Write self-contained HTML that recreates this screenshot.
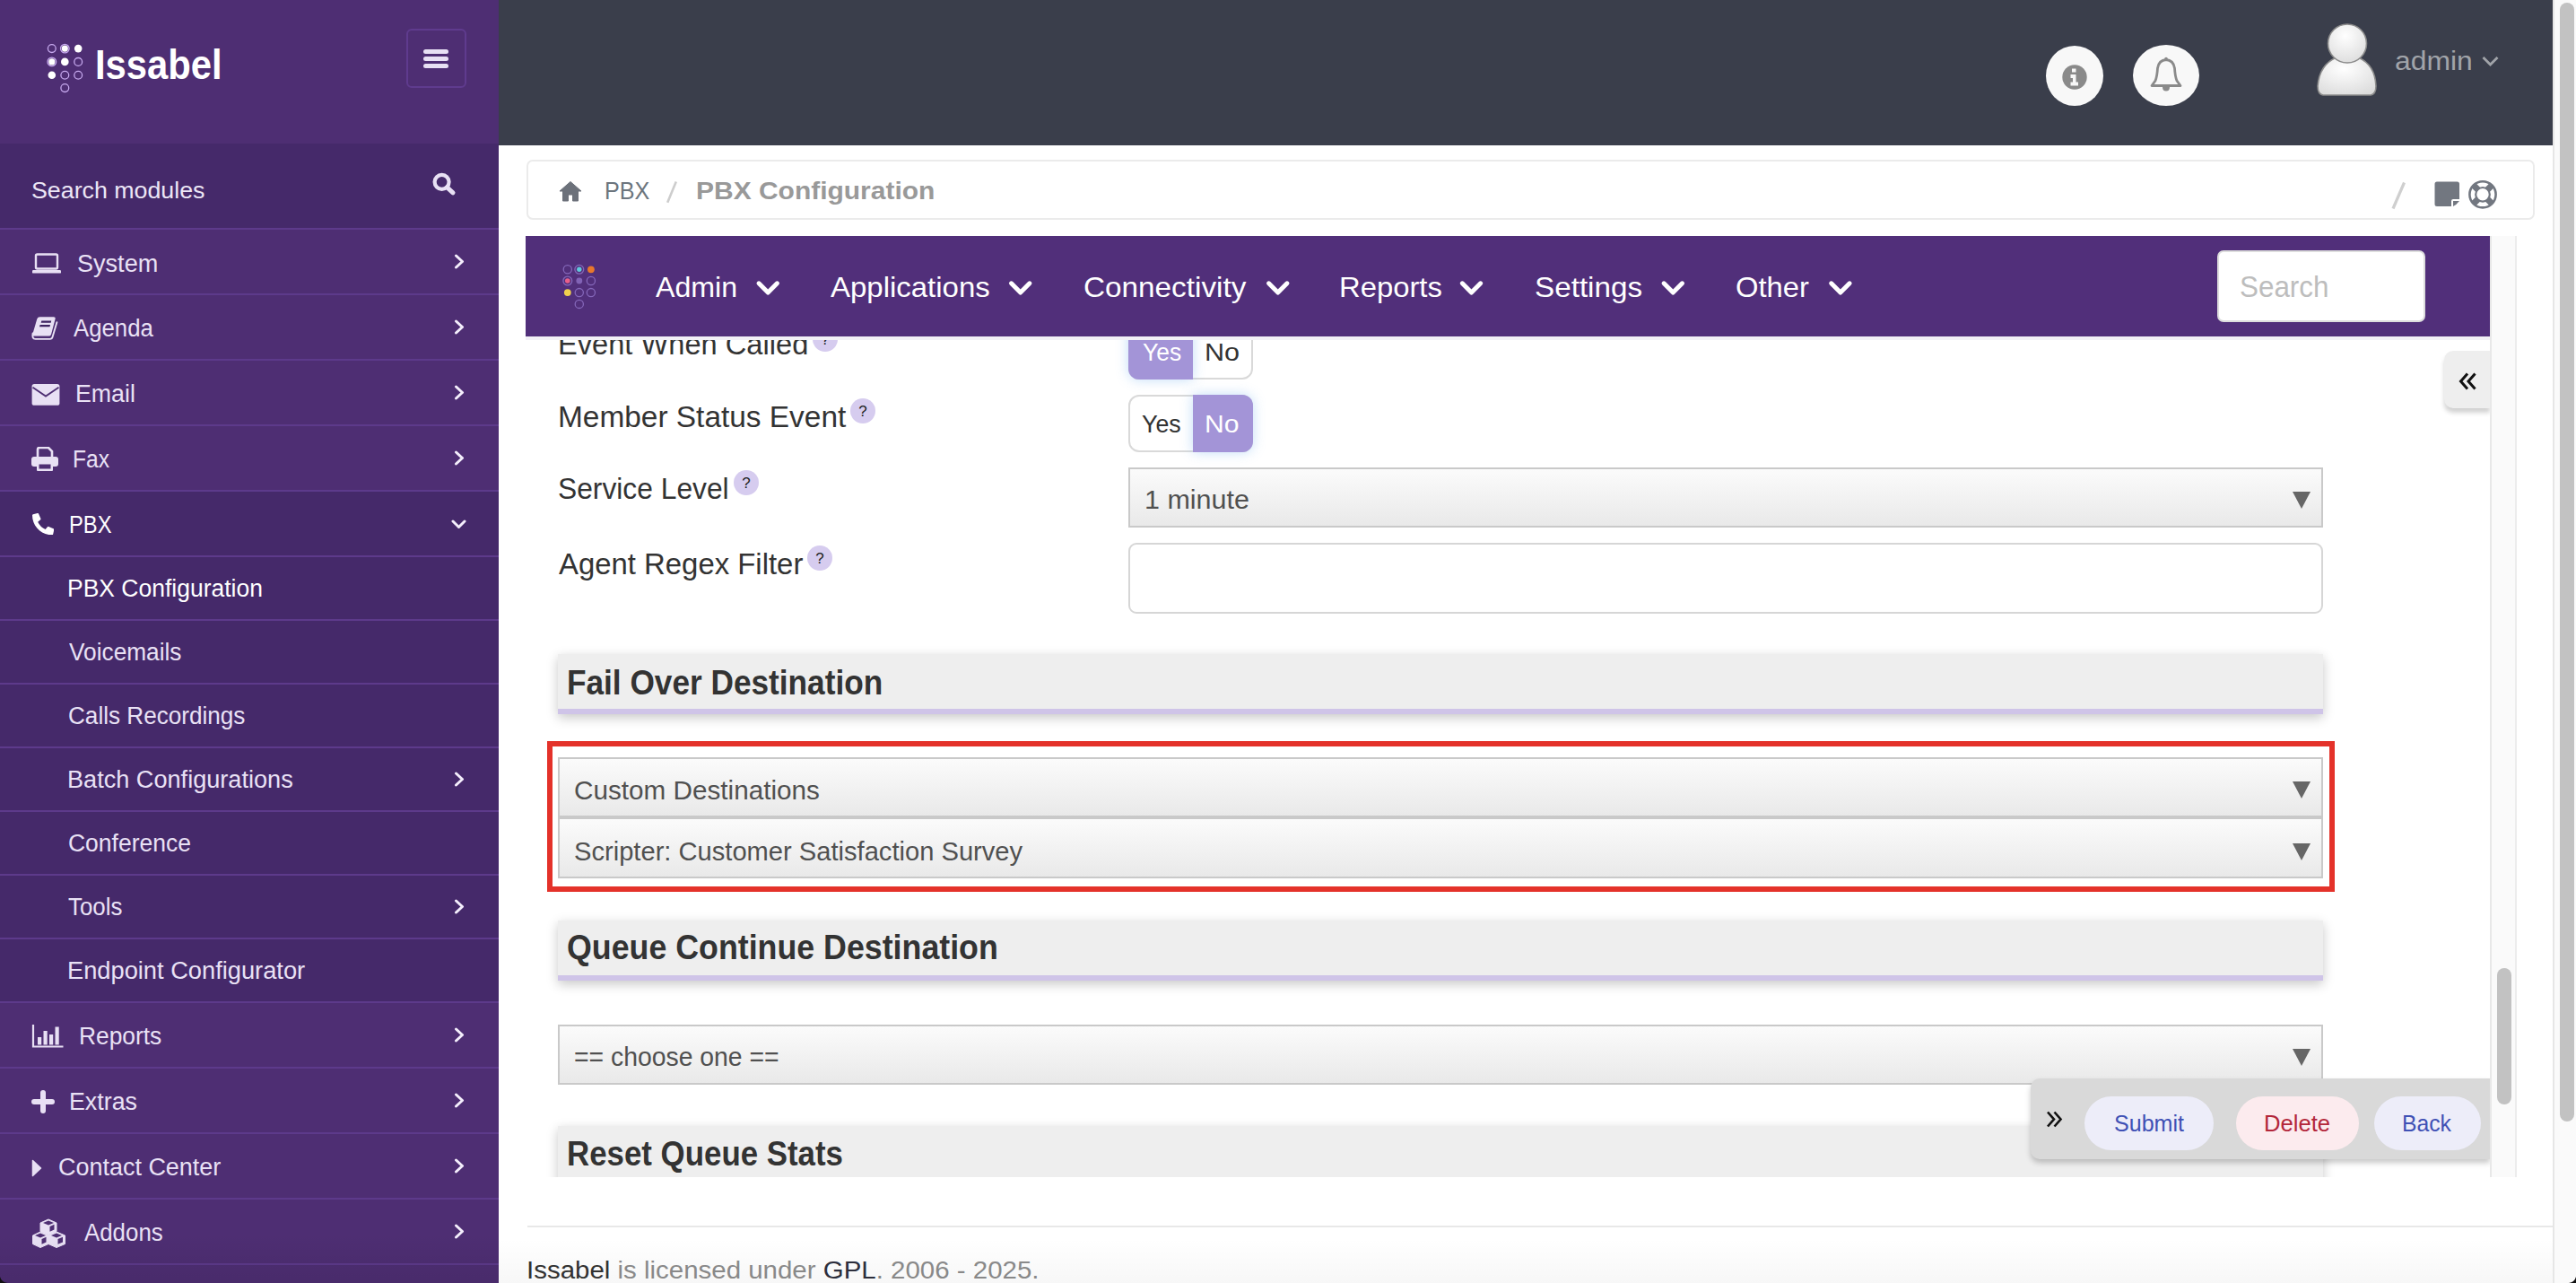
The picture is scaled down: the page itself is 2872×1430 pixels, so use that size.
<!DOCTYPE html>
<html><head><meta charset="utf-8">
<style>
*{box-sizing:border-box;margin:0;padding:0}
html,body{width:2872px;height:1430px;overflow:hidden;background:#fff;font-family:"Liberation Sans",sans-serif;position:relative}
.abs{position:absolute}
#sb{position:absolute;left:0;top:0;width:556px;height:1430px;background:#4e2e73;color:#e8e0f4;overflow:hidden}
.sbt{font-size:27px;line-height:30px;white-space:nowrap;color:#ebe4f6}
.tx{white-space:nowrap;transform-origin:0 0}
#sb .tx{color:#e9e1f5}
#sb .tx.w{color:#fff}
</style></head><body>

<div id="sb">
  <svg class="abs" style="left:40px;top:40px" width="60" height="70" viewBox="40 40 60 70">
    <g fill="none" stroke="#c6a9ee" stroke-width="1.3">
      <circle cx="57.8" cy="54.1" r="4.4"/>
      <circle cx="72.3" cy="54.1" r="4.8"/>
      <circle cx="57.8" cy="68.9" r="4.8"/>
      <circle cx="87.2" cy="68.9" r="4.4"/>
      <circle cx="72.3" cy="83.7" r="4.4"/>
      <circle cx="87.2" cy="83.7" r="4.4"/>
      <circle cx="72.3" cy="98.1" r="4.4"/>
    </g>
    <g fill="#fff">
      <circle cx="72.3" cy="54.1" r="3.6"/>
      <circle cx="87.2" cy="54.1" r="4.3"/>
      <circle cx="57.8" cy="68.9" r="3.6"/>
      <circle cx="72.3" cy="68.9" r="4.3"/>
      <circle cx="57.8" cy="83.7" r="4.3"/>
    </g>
  </svg>
  <div class="abs tx" style="left:106.03px;top:44.20px;font-size:47px;line-height:56.40px;font-weight:700;transform:scaleX(0.8890);color:#fff;">Issabel</div>
  <div class="abs" style="left:453px;top:32px;width:67px;height:66px;border:2px solid #5f3b8e;border-radius:6px"></div>
  <div class="abs" style="left:472px;top:55px;width:28px;height:5px;border-radius:3px;background:#e8e0f4"></div>
  <div class="abs" style="left:472px;top:63px;width:28px;height:5px;border-radius:3px;background:#e8e0f4"></div>
  <div class="abs" style="left:472px;top:71px;width:28px;height:5px;border-radius:3px;background:#e8e0f4"></div>
  <div class="abs" style="left:0;top:160px;width:556px;height:94px;background:#45296a"></div>
  <div class="abs tx" style="left:35.29px;top:197.20px;font-size:26.5px;line-height:31.80px;transform:scaleX(1.0103);color:#ece6f6;">Search modules</div>
  <svg class="abs" style="left:480px;top:190px" width="30" height="30" viewBox="0 0 30 30">
    <circle cx="12.6" cy="12.8" r="8" fill="none" stroke="#e8e0f4" stroke-width="4.2"/>
    <line x1="18.5" y1="18.8" x2="25" y2="24.8" stroke="#e8e0f4" stroke-width="5" stroke-linecap="round"/>
  </svg>
<div class="abs" style="left:0;top:254px;width:556px;height:73px;border-top:2px solid #5d3a8b"></div>
<div class="abs tx" style="left:86.29px;top:277.50px;font-size:26.8px;line-height:32.16px;transform:scaleX(1.0101);">System</div>
<svg class="abs" style="left:34px;top:282px" width="36" height="24" viewBox="0 0 36 24"><rect x="6" y="1.5" width="24" height="16" rx="1.5" fill="none" stroke="#e8e0f4" stroke-width="2.4"/><rect x="2" y="19" width="32" height="3.6" rx="1.2" fill="#e8e0f4"/></svg>
<svg class="abs" style="left:506px;top:283px" width="13" height="17" viewBox="0 0 13 17"><path d="M2.5 2 L9.5 8.5 L2.5 15" fill="none" stroke="#f4eefc" stroke-width="3" stroke-linecap="round" stroke-linejoin="round"/></svg>
<div class="abs" style="left:0;top:327px;width:556px;height:73px;border-top:2px solid #5d3a8b"></div>
<div class="abs tx" style="left:82.30px;top:349.70px;font-size:26.8px;line-height:32.16px;transform:scaleX(0.9612);">Agenda</div>
<svg class="abs" style="left:30px;top:345px" width="45" height="40" viewBox="30 345 45 40"><path d="M44.6 353.2 H59.6 Q62.1 353.2 61.6 355.6 L57.1 372.4 Q56.5 374.6 54.3 374.6 H38.3 Q35.9 374.6 36.4 372.2 L41.3 355.6 Q42 353.2 44.6 353.2 Z" fill="#e8e0f4"/><path d="M36.6 371.5 Q35.3 377.9 39.6 377.9 H55.8 Q57.9 377.9 58.5 375.8 L63.4 359.2" fill="none" stroke="#e8e0f4" stroke-width="1.9" stroke-linecap="round"/><path d="M46.3 357.6 H57.2 L56.7 359.8 H45.7 Z M44.6 362 H56 L55.5 364.2 H44 Z" fill="#3d2260"/></svg>
<svg class="abs" style="left:506px;top:356px" width="13" height="17" viewBox="0 0 13 17"><path d="M2.5 2 L9.5 8.5 L2.5 15" fill="none" stroke="#f4eefc" stroke-width="3" stroke-linecap="round" stroke-linejoin="round"/></svg>
<div class="abs" style="left:0;top:400px;width:556px;height:73px;border-top:2px solid #5d3a8b"></div>
<div class="abs tx" style="left:83.50px;top:422.90px;font-size:26.8px;line-height:32.16px;transform:scaleX(0.9976);">Email</div>
<svg class="abs" style="left:35px;top:427px" width="32" height="26" viewBox="0 0 32 26"><rect x="0.6" y="1" width="30.8" height="23.8" rx="2.6" fill="#e8e0f4"/><path d="M1.5 4.8 L16 14.6 L30.5 4.8" fill="none" stroke="#4e2e73" stroke-width="1.8"/></svg>
<svg class="abs" style="left:506px;top:429px" width="13" height="17" viewBox="0 0 13 17"><path d="M2.5 2 L9.5 8.5 L2.5 15" fill="none" stroke="#f4eefc" stroke-width="3" stroke-linecap="round" stroke-linejoin="round"/></svg>
<div class="abs" style="left:0;top:473px;width:556px;height:73px;border-top:2px solid #5d3a8b"></div>
<div class="abs tx" style="left:81.37px;top:496.00px;font-size:26.8px;line-height:32.16px;transform:scaleX(0.9175);">Fax</div>
<svg class="abs" style="left:34px;top:498px" width="32" height="28" viewBox="0 0 32 28"><path d="M8 11 V3 Q8 1 10 1 H20 L24 5 V11" fill="none" stroke="#e8e0f4" stroke-width="2.6"/><rect x="1" y="11" width="30" height="11" rx="3" fill="#e8e0f4"/><rect x="7" y="17" width="18" height="10" rx="1" fill="#e8e0f4" stroke="#4e2e73" stroke-width="0"/><rect x="9.5" y="19.5" width="13" height="5" fill="#4e2e73"/></svg>
<svg class="abs" style="left:506px;top:502px" width="13" height="17" viewBox="0 0 13 17"><path d="M2.5 2 L9.5 8.5 L2.5 15" fill="none" stroke="#f4eefc" stroke-width="3" stroke-linecap="round" stroke-linejoin="round"/></svg>
<div class="abs" style="left:0;top:546px;width:556px;height:73px;background:#45296a;border-top:2px solid #5d3a8b"></div>
<div class="abs tx" style="left:77.13px;top:569.00px;font-size:26.8px;line-height:32.16px;transform:scaleX(0.8870);color:#ffffff;">PBX</div>
<svg class="abs" style="left:35.8px;top:572px" width="24.3" height="24.3" viewBox="0 0 512 512"><path d="M497.39 361.8l-112-48a24 24 0 0 0-28 6.9l-49.6 60.6A370.66 370.66 0 0 1 130.6 204.11l60.6-49.6a23.94 23.94 0 0 0 6.9-28l-48-112A24.16 24.16 0 0 0 122.6.61l-104 24A24 24 0 0 0 0 48c0 256.5 207.9 464 464 464a24 24 0 0 0 23.4-18.6l24-104a24.29 24.29 0 0 0-14.01-27.6z" fill="#fff"/></svg>
<svg class="abs" style="left:503px;top:578px" width="17" height="13" viewBox="0 0 17 13"><path d="M2 3 L8.5 9.5 L15 3" fill="none" stroke="#f4eefc" stroke-width="3" stroke-linecap="round" stroke-linejoin="round"/></svg>
<div class="abs" style="left:0;top:619px;width:556px;height:71px;background:#45296a;border-top:2px solid #5d3a8b"></div>
<div class="abs tx" style="left:75.22px;top:640.30px;font-size:26.8px;line-height:32.16px;transform:scaleX(0.9887);color:#ffffff;">PBX Configuration</div>
<div class="abs" style="left:0;top:690px;width:556px;height:71px;background:#45296a;border-top:2px solid #5d3a8b"></div>
<div class="abs tx" style="left:76.80px;top:711.20px;font-size:26.8px;line-height:32.16px;transform:scaleX(0.9798);">Voicemails</div>
<div class="abs" style="left:0;top:761px;width:556px;height:71px;background:#45296a;border-top:2px solid #5d3a8b"></div>
<div class="abs tx" style="left:75.53px;top:782.30px;font-size:26.8px;line-height:32.16px;transform:scaleX(0.9744);">Calls Recordings</div>
<div class="abs" style="left:0;top:832px;width:556px;height:71px;background:#45296a;border-top:2px solid #5d3a8b"></div>
<div class="abs tx" style="left:74.98px;top:853.10px;font-size:26.8px;line-height:32.16px;transform:scaleX(1.0119);">Batch Configurations</div>
<svg class="abs" style="left:506px;top:860px" width="13" height="17" viewBox="0 0 13 17"><path d="M2.5 2 L9.5 8.5 L2.5 15" fill="none" stroke="#f4eefc" stroke-width="3" stroke-linecap="round" stroke-linejoin="round"/></svg>
<div class="abs" style="left:0;top:903px;width:556px;height:71px;background:#45296a;border-top:2px solid #5d3a8b"></div>
<div class="abs tx" style="left:75.51px;top:924.00px;font-size:26.8px;line-height:32.16px;transform:scaleX(0.9880);">Conference</div>
<div class="abs" style="left:0;top:974px;width:556px;height:71px;background:#45296a;border-top:2px solid #5d3a8b"></div>
<div class="abs tx" style="left:76.30px;top:995.00px;font-size:26.8px;line-height:32.16px;transform:scaleX(0.9653);">Tools</div>
<svg class="abs" style="left:506px;top:1002px" width="13" height="17" viewBox="0 0 13 17"><path d="M2.5 2 L9.5 8.5 L2.5 15" fill="none" stroke="#f4eefc" stroke-width="3" stroke-linecap="round" stroke-linejoin="round"/></svg>
<div class="abs" style="left:0;top:1045px;width:556px;height:71px;background:#45296a;border-top:2px solid #5d3a8b"></div>
<div class="abs tx" style="left:75.47px;top:1066.10px;font-size:26.8px;line-height:32.16px;transform:scaleX(1.0171);">Endpoint Configurator</div>
<div class="abs" style="left:0;top:1116px;width:556px;height:73px;border-top:2px solid #5d3a8b"></div>
<div class="abs tx" style="left:88.13px;top:1139.10px;font-size:26.8px;line-height:32.16px;transform:scaleX(0.9833);">Reports</div>
<svg class="abs" style="left:35px;top:1141px" width="37" height="28" viewBox="0 0 37 28"><path d="M2 1 V25.5 H35.5" fill="none" stroke="#e8e0f4" stroke-width="2.2"/><rect x="7" y="15" width="4.2" height="8.5" fill="#e8e0f4"/><rect x="13.5" y="8" width="4.2" height="15.5" fill="#e8e0f4"/><rect x="20" y="12" width="4.2" height="11.5" fill="#e8e0f4"/><rect x="26.5" y="3.5" width="4.2" height="20" fill="#e8e0f4"/></svg>
<svg class="abs" style="left:506px;top:1145px" width="13" height="17" viewBox="0 0 13 17"><path d="M2.5 2 L9.5 8.5 L2.5 15" fill="none" stroke="#f4eefc" stroke-width="3" stroke-linecap="round" stroke-linejoin="round"/></svg>
<div class="abs" style="left:0;top:1189px;width:556px;height:73px;border-top:2px solid #5d3a8b"></div>
<div class="abs tx" style="left:77.00px;top:1212.00px;font-size:26.8px;line-height:32.16px;">Extras</div>
<svg class="abs" style="left:35px;top:1215px" width="26" height="26" viewBox="0 0 26 26"><path d="M13 3 V23 M3 13 H23" stroke="#e8e0f4" stroke-width="6" stroke-linecap="round"/></svg>
<svg class="abs" style="left:506px;top:1218px" width="13" height="17" viewBox="0 0 13 17"><path d="M2.5 2 L9.5 8.5 L2.5 15" fill="none" stroke="#f4eefc" stroke-width="3" stroke-linecap="round" stroke-linejoin="round"/></svg>
<div class="abs" style="left:0;top:1262px;width:556px;height:73px;border-top:2px solid #5d3a8b"></div>
<div class="abs tx" style="left:64.89px;top:1285.00px;font-size:26.8px;line-height:32.16px;transform:scaleX(1.0061);">Contact Center</div>
<svg class="abs" style="left:35px;top:1292px" width="12" height="20" viewBox="0 0 12 20"><path d="M1.5 1.5 L10.5 10 L1.5 18.5 Z" fill="#e8e0f4" stroke="#e8e0f4" stroke-width="1.5" stroke-linejoin="round"/></svg>
<svg class="abs" style="left:506px;top:1291px" width="13" height="17" viewBox="0 0 13 17"><path d="M2.5 2 L9.5 8.5 L2.5 15" fill="none" stroke="#f4eefc" stroke-width="3" stroke-linecap="round" stroke-linejoin="round"/></svg>
<div class="abs" style="left:0;top:1335px;width:556px;height:73px;border-top:2px solid #5d3a8b"></div>
<div class="abs tx" style="left:93.70px;top:1357.60px;font-size:26.8px;line-height:32.16px;transform:scaleX(0.9648);">Addons</div>
<svg class="abs" style="left:35px;top:1358px" width="40" height="33" viewBox="0 0 40 33"><g fill="#e8e0f4" stroke="#e8e0f4" stroke-width="1" stroke-linejoin="round"><path d="M19 1 L28 5 V14.5 L19 18.5 L10 14.5 V5 Z"/><path d="M10 15 L19 19 V28.5 L10 32.5 L1.5 28.5 V19 Z"/><path d="M28 15 L37.5 19 V28.5 L28 32.5 L19 28.5 V19 Z"/></g><g fill="#4e2e73"><path d="M13 5 L19 2.5 L25 5 L19 7.5 Z"/><path d="M20.5 9 L25.5 6.8 V12.5 L20.5 14.8 Z"/><path d="M4 19 L10 16.5 L16 19 L10 21.5 Z"/><path d="M11.5 23 L16.5 20.8 V26.5 L11.5 28.8 Z"/><path d="M22 19 L28 16.5 L34 19 L28 21.5 Z"/><path d="M29.5 23 L35 20.8 V26.5 L29.5 28.8 Z"/></g></svg>
<svg class="abs" style="left:506px;top:1364px" width="13" height="17" viewBox="0 0 13 17"><path d="M2.5 2 L9.5 8.5 L2.5 15" fill="none" stroke="#f4eefc" stroke-width="3" stroke-linecap="round" stroke-linejoin="round"/></svg>
<div class="abs" style="left:0;top:1408px;width:556px;height:24px;border-top:2px solid #5d3a8b"></div>
</div>
<!-- top header -->
<div class="abs" style="left:556px;top:0;width:2290px;height:161.5px;background:#3a3e4b"></div>
<div class="abs" style="left:2281px;top:51px;width:64px;height:67px;border-radius:50%;background:#f8f8f8"></div>
<svg class="abs" style="left:2299px;top:72px" width="28" height="28" viewBox="0 0 28 28"><circle cx="14" cy="14" r="13.7" fill="#8a8a8a"/><path d="M11 4.5 H15.5 V8.5 H11 Z M9.5 11 H15.5 V19.5 H18 V23.5 H9.5 V19.5 H12 V15 H9.5 Z" fill="#f8f8f8"/></svg>
<div class="abs" style="left:2378px;top:50px;width:74px;height:68px;border-radius:50%;background:#f8f8f8"></div>
<svg class="abs" style="left:2395px;top:63px" width="40" height="41" viewBox="0 0 40 41"><path d="M20 3.5 Q28 4 29.5 13 Q30 22 32 27 L36 32.5 H4 L8 27 Q10 22 10.5 13 Q12 4 20 3.5 Z" fill="none" stroke="#8a8a8a" stroke-width="2.8" stroke-linejoin="round"/><circle cx="20" cy="2.6" r="1.8" fill="#8a8a8a"/><path d="M16 34 Q16 38.5 20 38.5 Q24 38.5 24 34 Z" fill="#8a8a8a"/></svg>
<svg class="abs" style="left:2580px;top:24px" width="74" height="88" viewBox="0 0 74 88">
 <defs><radialGradient id="ag" cx="0.45" cy="0.3" r="0.8"><stop offset="0" stop-color="#ffffff"/><stop offset="1" stop-color="#dadada"/></radialGradient></defs>
 <path d="M10 82 Q4 81 4 72 Q6 48 25 40 L49 40 Q68 48 69 72 Q69 81 63 82 Z" fill="url(#ag)" stroke="#8b8b8b" stroke-width="1.6"/>
 <circle cx="37" cy="24.5" r="21.5" fill="url(#ag)" stroke="#8b8b8b" stroke-width="1.6"/>
</svg>
<div class="abs tx" style="left:2669.84px;top:50.00px;font-size:30px;line-height:36.00px;transform:scaleX(1.0617);color:#a1a4a9;">admin</div>
<svg class="abs" style="left:2766px;top:61px" width="21" height="15" viewBox="0 0 21 15"><path d="M2.5 3 L10.5 11 L18.5 3" fill="none" stroke="#a1a4a9" stroke-width="2.8"/></svg>

<!-- breadcrumb -->
<div class="abs" style="left:586.5px;top:178px;width:2239.5px;height:66.5px;border:2px solid #ebebeb;border-radius:7px;background:#fff"></div>
<svg class="abs" style="left:623px;top:201px" width="26" height="24" viewBox="0 0 26 24"><path d="M13 1.5 L25 12 H21.5 V23 H15.5 V16 H10.5 V23 H4.5 V12 H1 Z" fill="#6c717a" stroke="#6c717a" stroke-width="1" stroke-linejoin="round"/></svg>
<div class="abs tx" style="left:673.64px;top:196.70px;font-size:27px;line-height:32.40px;transform:scaleX(0.9324);color:#6c757d;">PBX</div>
<svg class="abs" style="left:740px;top:200px" width="18" height="30" viewBox="740 200 18 30"><path d="M753.8 202.5 L744.2 225.8" stroke="#cdcdcd" stroke-width="2.6"/></svg>
<div class="abs tx" style="left:775.69px;top:196.70px;font-size:27px;line-height:32.40px;font-weight:700;transform:scaleX(1.1099);color:#999;">PBX Configuration</div>
<svg class="abs" style="left:2665px;top:202px" width="18" height="32" viewBox="0 0 18 32"><path d="M15.5 1.5 L3 30.5" stroke="#cfcfcf" stroke-width="3.2"/></svg>
<svg class="abs" style="left:2714px;top:202px" width="29" height="29" viewBox="0 0 29 29"><path d="M3 0.5 H25.5 Q28 0.5 28 3 V20 H21 Q19 20 19 22 V28 H3 Q0.5 28 0.5 25.5 V3 Q0.5 0.5 3 0.5 Z" fill="#727780"/><path d="M21 22 H28 Q25 26 21 28 Z" fill="#727780"/></svg>
<svg class="abs" style="left:2751px;top:200px" width="34" height="34" viewBox="0 0 34 34"><circle cx="17" cy="16.8" r="14.6" fill="none" stroke="#727780" stroke-width="2.6"/><circle cx="17" cy="16.8" r="7.8" fill="none" stroke="#727780" stroke-width="2.2"/><path d="M7 6.8 L12 11.8 M27 6.8 L22 11.8 M7 26.8 L12 21.8 M27 26.8 L22 21.8" stroke="#727780" stroke-width="7"/></svg>

<!-- iframe content -->
<div class="abs" id="frame" style="left:586px;top:263px;width:2190px;height:1049px;overflow:hidden;background:#fff">
<div class="abs" style="left:-586px;top:-263px;width:2872px;height:1430px">
<style>
.lbl{position:absolute;left:622px;font-size:32px;line-height:40px;color:#333;white-space:nowrap}
.q{position:absolute;width:28px;height:28px;border-radius:50%;background:#d6ccef;color:#222;font-size:17px;line-height:29px;text-align:center}
.tgb{position:absolute;left:1258px;width:139px;height:64px;border:2px solid #d9d9d9;border-radius:12px;background:#fff}
.on{background:#a394d7;box-shadow:0 0 14px rgba(120,180,240,.45)}
.tg{position:absolute;left:1258px;width:139px;height:64px;border:2px solid #d3d3d3;border-radius:12px;background:#fff;overflow:visible}
.tg .y,.tg .n{position:absolute;top:-2px;height:64px;font-size:28px;line-height:64px;color:#333}
.tg .y{left:-2px;width:74px;padding-left:16px}
.tg .n{left:72px;width:67px;padding-left:14px}
.tg .on{background:#a394d8;color:#fff;box-shadow:0 0 14px rgba(120,180,240,.45)}
.sel{position:absolute;left:622px;width:1968px;border:2px solid #c9c9c9;background:linear-gradient(#fbfbfb,#e9e9e9);font-size:30px;color:#444;white-space:nowrap}
.sel .tx{position:absolute;left:17px}
.tri{position:absolute;left:2556px;width:0;height:0;border-left:10px solid transparent;border-right:10px solid transparent;border-top:19px solid #666}
.sec{position:absolute;left:622px;width:1968px;height:67px;background:#eeeeee;border-bottom:6px solid #cfc4e8;box-shadow:0 4px 12px rgba(0,0,0,.22)}
.sec span{position:absolute;left:11px;font-size:36px;font-weight:bold;color:#333;letter-spacing:-0.8px;white-space:nowrap}
</style>

<!-- Event When Called (partially hidden) -->
<div class="abs tx" style="left:622.49px;top:365.20px;font-size:32.5px;line-height:39.00px;transform:scaleX(1.0039);color:#333;">Event When Called</div>
<div class="q" style="left:906px;top:364px">?</div>
<div class="tgb" style="top:359px"></div><div class="abs on" style="left:1258px;top:359px;width:72px;height:64px;border-radius:0 0 0 12px"></div><div class="abs tx" style="left:1273.50px;top:374.90px;font-size:28.5px;line-height:34.20px;transform:scaleX(0.9277);color:#fff;">Yes</div><div class="abs tx" style="left:1342.86px;top:374.90px;font-size:28.5px;line-height:34.20px;transform:scaleX(1.0720);color:#333;">No</div>

<div class="abs tx" style="left:621.94px;top:446.10px;font-size:32.5px;line-height:39.00px;transform:scaleX(1.0281);color:#333;">Member Status Event</div>
<div class="q" style="left:948px;top:444px">?</div>
<div class="tgb" style="top:440px"></div><div class="abs on" style="left:1330px;top:440px;width:67px;height:64px;border-radius:0 12px 12px 0"></div><div class="abs tx" style="left:1273.00px;top:454.90px;font-size:28.5px;line-height:34.20px;transform:scaleX(0.9385);color:#333;">Yes</div><div class="abs tx" style="left:1343.39px;top:454.90px;font-size:28.5px;line-height:34.20px;transform:scaleX(1.0571);color:#fff;">No</div>

<div class="abs tx" style="left:622.02px;top:526.30px;font-size:32.5px;line-height:39.00px;transform:scaleX(0.9773);color:#333;">Service Level</div>
<div class="q" style="left:818px;top:524px">?</div>
<div class="sel" style="left:1258px;width:1332px;top:521px;height:67px"></div>
<div class="tri" style="top:548px"></div><div class="abs tx" style="left:1275.97px;top:539.00px;font-size:30px;line-height:36.00px;transform:scaleX(1.0153);color:#505050;">1 minute</div>

<div class="abs tx" style="left:622.50px;top:609.70px;font-size:32.5px;line-height:39.00px;transform:scaleX(1.0118);color:#333;">Agent Regex Filter</div>
<div class="q" style="left:900px;top:608px">?</div>
<div class="abs" style="left:1258px;top:605px;width:1332px;height:79px;border:2px solid #d6d6d6;border-radius:9px;background:#fff"></div>

<div class="sec" style="top:729px"></div><div class="abs tx" style="left:632.45px;top:738.50px;font-size:38px;line-height:45.60px;font-weight:700;transform:scaleX(0.9266);color:#333;">Fail Over Destination</div>

<div class="abs" style="left:610px;top:826px;width:1993px;height:168px;border:6px solid #e4322a"></div>
<div class="sel" style="top:844px;height:67px"></div>
<div class="tri" style="top:871px"></div><div class="abs tx" style="left:640.11px;top:863.30px;font-size:30px;line-height:36.00px;transform:scaleX(0.9895);color:#505050;">Custom Destinations</div>
<div class="sel" style="top:911px;height:68px"></div>
<div class="tri" style="top:940px"></div><div class="abs tx" style="left:640.13px;top:930.70px;font-size:30px;line-height:36.00px;transform:scaleX(0.9707);color:#505050;">Scripter: Customer Satisfaction Survey</div>

<div class="sec" style="top:1026px"></div><div class="abs tx" style="left:632.16px;top:1034.40px;font-size:38px;line-height:45.60px;font-weight:700;transform:scaleX(0.9411);color:#333;">Queue Continue Destination</div>

<div class="sel" style="top:1142px;height:67px"></div>
<div class="tri" style="top:1169px"></div><div class="abs tx" style="left:640.25px;top:1159.80px;font-size:30px;line-height:36.00px;transform:scaleX(0.9453);color:#505050;">== choose one ==</div>

<div class="sec" style="top:1255px"></div><div class="abs tx" style="left:632.47px;top:1263.60px;font-size:38px;line-height:45.60px;font-weight:700;transform:scaleX(0.9172);color:#333;">Reset Queue Stats</div>

<!-- menubar -->
<div class="abs" style="left:586px;top:263px;width:2190px;height:112px;background:#512f7a"></div>
<div class="abs" style="left:586px;top:375px;width:2190px;height:4px;background:#f2f0f6"></div>
<svg class="abs" style="left:620px;top:290px" width="50" height="58" viewBox="620 290 50 58">
 <g fill="none" stroke="#8467b9" stroke-width="1.3">
  <circle cx="632.8" cy="300.3" r="4.6"/><circle cx="645.8" cy="300.3" r="4.9"/>
  <circle cx="632.8" cy="313" r="4.9"/><circle cx="658.9" cy="313" r="4.6"/>
  <circle cx="645.8" cy="326.1" r="4.6"/><circle cx="658.9" cy="326.1" r="4.6"/>
  <circle cx="645.8" cy="338.9" r="4.6"/>
 </g>
 <circle cx="645.8" cy="300.3" r="2.7" fill="#62c9dc"/>
 <circle cx="658.9" cy="300.3" r="3.9" fill="#e8782c"/>
 <circle cx="632.8" cy="313" r="2.8" fill="#e9608a"/>
 <circle cx="645.8" cy="313" r="3.4" fill="#8163b5"/>
 <circle cx="632.8" cy="326.1" r="3.9" fill="#f0d04e"/>
</svg>
<div class="abs tx" style="left:731.00px;top:301.00px;font-size:32px;line-height:38.40px;transform:scaleX(1.0044);color:#fff;">Admin</div><div class="abs tx" style="left:926.10px;top:301.00px;font-size:32px;line-height:38.40px;transform:scaleX(1.0300);color:#fff;">Applications</div><div class="abs tx" style="left:1207.66px;top:301.00px;font-size:32px;line-height:38.40px;transform:scaleX(1.0404);color:#fff;">Connectivity</div><div class="abs tx" style="left:1492.75px;top:301.00px;font-size:32px;line-height:38.40px;transform:scaleX(1.0252);color:#fff;">Reports</div><div class="abs tx" style="left:1710.96px;top:301.00px;font-size:32px;line-height:38.40px;transform:scaleX(1.0385);color:#fff;">Settings</div><div class="abs tx" style="left:1934.78px;top:301.00px;font-size:32px;line-height:38.40px;transform:scaleX(1.0230);color:#fff;">Other</div>
<style>.mi{font-size:32px;line-height:40px;color:#fff;white-space:nowrap}</style>
<svg class="abs" style="left:0;top:0" width="2872" height="400">
 <g fill="none" stroke="#fff" stroke-width="5" stroke-linecap="round" stroke-linejoin="round">
  <path d="M846.05 315.8 L856.25 326 L866.45 315.8"/>
  <path d="M1127.50 315.8 L1137.70 326 L1147.90 315.8"/>
  <path d="M1414.55 315.8 L1424.75 326 L1434.95 315.8"/>
  <path d="M1630.30 315.8 L1640.50 326 L1650.70 315.8"/>
  <path d="M1855.10 315.8 L1865.30 326 L1875.50 315.8"/>
  <path d="M2041.70 315.8 L2051.90 326 L2062.10 315.8"/>
 </g>
</svg>
<div class="abs" style="left:2472px;top:279px;width:232px;height:80px;background:#fff;border:2px solid #ddd;border-radius:7px"></div>
<div class="abs tx" style="left:2496.95px;top:299.90px;font-size:33px;line-height:39.60px;transform:scaleX(0.9510);color:#bdbdbd;">Search</div>

<!-- collapse tab -->
<div class="abs" style="left:2725px;top:391px;width:51px;height:64px;background:#eeeeee;border-radius:10px 0 0 10px;box-shadow:0 5px 5px rgba(0,0,0,.18)"></div>
<svg class="abs" style="left:2740px;top:414px" width="24" height="22" viewBox="0 0 24 22"><path d="M11 2.5 L3.5 11 L11 19.5 M19.5 2.5 L12 11 L19.5 19.5" fill="none" stroke="#111" stroke-width="3"/></svg>

<!-- floating toolbar -->
<div class="abs" style="left:2264px;top:1202px;width:512px;height:90px;background:#d9d9d9;border-radius:10px 0 0 10px;box-shadow:0 4px 6px rgba(0,0,0,.22)"></div>
<svg class="abs" style="left:2280px;top:1237px" width="22" height="22" viewBox="0 0 22 22"><path d="M3 2.5 L10 10.5 L3 18.5 M10.5 2.5 L17.5 10.5 L10.5 18.5" fill="none" stroke="#111" stroke-width="2.6"/></svg>
<div class="abs pill" style="left:2324px;width:144px;background:#ededf9"></div><div class="abs tx" style="left:2356.50px;top:1236.60px;font-size:25px;line-height:30.00px;transform:scaleX(1.0031);color:#3f51b5;">Submit</div>
<div class="abs pill" style="left:2493px;width:137px;background:#fcebee"></div><div class="abs tx" style="left:2523.95px;top:1236.60px;font-size:25px;line-height:30.00px;transform:scaleX(1.0251);color:#b3263a;">Delete</div>
<div class="abs pill" style="left:2647px;width:119px;background:#ededf9"></div><div class="abs tx" style="left:2677.52px;top:1236.60px;font-size:25px;line-height:30.00px;transform:scaleX(0.9893);color:#3f51b5;">Back</div>
<style>.pill{top:1222px;height:60px;border-radius:30px;font-size:25px;line-height:60px;text-align:center}</style>
</div>
</div>

<!-- inner scrollbar -->
<div class="abs" style="left:2776px;top:263px;width:30px;height:1049px;background:#fafafa;border-left:2px solid #e8e8e8;border-right:2px solid #ececec"></div>
<div class="abs" style="left:2784px;top:1079px;width:16px;height:152px;background:#c2c2c2;border-radius:8px"></div>

<!-- footer -->
<div class="abs" style="left:588px;top:1366px;width:2258px;height:2px;background:#e8e8e8"></div>
<div class="abs tx" style="left:586.72px;top:1400.40px;font-size:27px;line-height:32.40px;transform:scaleX(1.0909);color:#8c8c8c;"><span style="color:#333">Issabel</span> is licensed under <span style="color:#2d2f3d">GPL</span>. 2006 - 2025.</div>

<div class="abs" style="left:556px;top:1380px;width:2290px;height:50px;background:linear-gradient(rgba(0,0,0,0),rgba(0,0,0,.03))"></div>
<div class="abs" style="left:0;top:1375px;width:556px;height:55px;background:linear-gradient(rgba(0,0,0,0),rgba(0,0,0,.07))"></div>
<!-- outer scrollbar -->
<div class="abs" style="left:2846px;top:0;width:26px;height:1430px;background:#fafafa;border-left:2px solid #e6e6e6"></div>
<div class="abs" style="left:2854px;top:3px;width:16px;height:1247px;background:#c2c2c2;border-radius:8px"></div>

<svg class="abs" style="left:0;top:1418px" width="14" height="12" viewBox="0 1418 14 12"><path d="M0 1423 Q1.5 1429 8.5 1430 L0 1430 Z" fill="#111"/></svg>
<svg class="abs" style="left:2858px;top:1418px" width="14" height="12" viewBox="2858 1418 14 12"><path d="M2872 1423 Q2870.5 1429 2864 1430 L2872 1430 Z" fill="#111"/></svg>

</body></html>
